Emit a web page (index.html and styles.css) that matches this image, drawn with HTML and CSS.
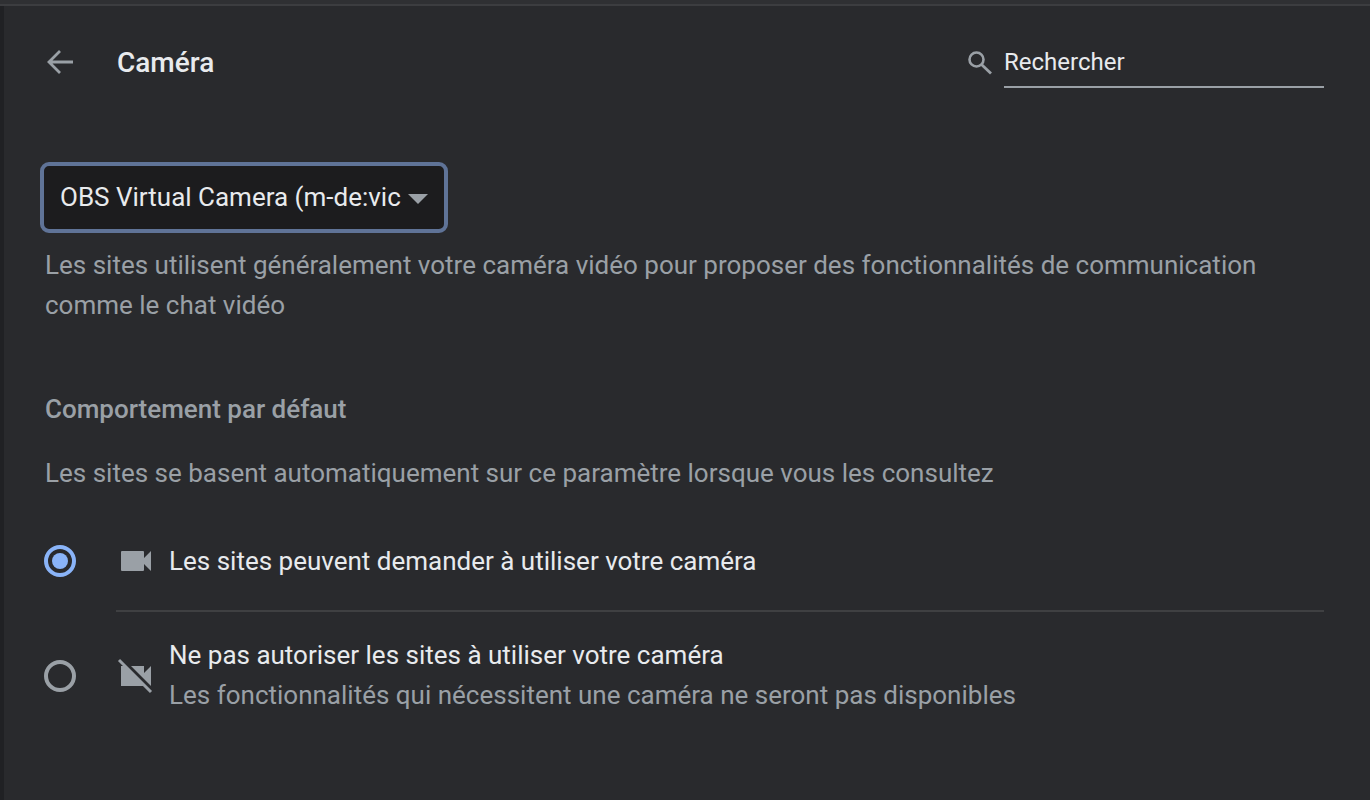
FILE: index.html
```html
<!DOCTYPE html>
<html lang="fr">
<head>
    <meta charset="UTF-8">
    <title>Caméra</title>
    <link rel="stylesheet" href="styles.css">
</head>
<body>
    <div class="topStrip"></div>
    <div class="page">
        <div class="sideStrip"></div>
        <div class="content">

            <div class="header">
                <svg class="backIcon" width="32" height="32" viewBox="0 0 32 32">
                    <path d="M28 16H4M15 5L4 16l11 11" fill="none" stroke="#9aa0a6" stroke-width="2.8"/>
                </svg>
                <div class="title">Caméra</div>
                <div class="search">
                    <svg class="searchIcon" width="26" height="26" viewBox="0 0 26 26">
                        <circle cx="10.5" cy="10.500" r="7" fill="none" stroke="#9aa0a6" stroke-width="2.6"/>
                        <path d="M15.500 15.500l9.500 9" fill="none" stroke="#9aa0a6" stroke-width="2.8"/>
                    </svg>
                    <div class="searchBox">Rechercher</div>
                </div>
            </div>

            <div class="cameraSelect">
                <span class="cameraName">OBS Virtual Camera (m-de:vic</span>
                <span class="arrow"></span>
            </div>

            <div class="description">Les sites utilisent généralement votre caméra vidéo pour proposer des fonctionnalités de communication comme le chat vidéo</div>

            <div class="sectionTitle">Comportement par défaut</div>
            <div class="sectionText">Les sites se basent automatiquement sur ce paramètre lorsque vous les consultez</div>

            <div class="option optionFirst">
                <div class="radio radioOn"><div class="radioDot"></div></div>
                <svg class="optionIcon" width="32" height="32" viewBox="0 0 32 32">
                    <path d="M2 6h21a1 1 0 0 1 1 1v6l7-7v20l-7-7v6a1 1 0 0 1-1 1H2a1 1 0 0 1-1-1V7a1 1 0 0 1 1-1z" fill="#9aa0a6"/>
                </svg>
                <div class="optionLabel">Les sites peuvent demander à utiliser votre caméra</div>
            </div>

            <div class="separator"></div>

            <div class="option optionSecond">
                <div class="radio"></div>
                <svg class="optionIcon" width="32" height="32" viewBox="0 0 32 32">
                    <path d="M1 6h4l20 20H1z" fill="#9aa0a6"/>
                    <path d="M11 6h13v7l7-7v20z" fill="#9aa0a6"/>
                    <path d="M-1 0l32 32" fill="none" stroke="#9aa0a6" stroke-width="3"/>
                </svg>
                <div class="optionText">
                    <div class="optionLabel">Ne pas autoriser les sites à utiliser votre caméra</div>
                    <div class="optionSub">Les fonctionnalités qui nécessitent une caméra ne seront pas disponibles</div>
                </div>
            </div>

        </div>
    </div>
</body>
</html>
```

FILE: styles.css
```css
html, body {
    margin: 0;
    height: 100%;
    overflow: hidden;
}
body {
    background-color: #292a2d;
    font-family: Roboto, sans-serif;
    font-size: 26px;
    color: #e8eaed;
}
.topStrip {
    height: 4px;
    background-color: #2f3033;
    border-bottom: 2px solid #3c3d40;
}
.page {
    display: flex;
    height: 794px;
}
.sideStrip {
    width: 4px;
    background-color: #202124;
}
.content {
    width: 1279px;
    padding-left: 41px;
}
.header {
    display: flex;
    align-items: center;
    height: 112px;
}
.title {
    margin-left: 40px;
    font-size: 28px;
    font-weight: 500;
    flex: 1;
}
.search {
    display: flex;
    align-items: center;
}
.searchIcon {
    margin-right: 12px;
}
.searchBox {
    width: 320px;
    height: 50px;
    line-height: 48px;
    font-size: 24px;
    border-bottom: 2px solid #9aa0a6;
    box-sizing: border-box;
    margin-top: 1px;
}
.cameraSelect {
    display: flex;
    align-items: center;
    box-sizing: border-box;
    width: 408px;
    height: 71px;
    margin-top: 44px;
    margin-left: -5px;
    padding-left: 16px;
    padding-bottom: 2px;
    background-color: #1c1c1e;
    border: 4px solid #5f7397;
    border-radius: 9px;
}
.cameraName {
    white-space: nowrap;
}
.arrow {
    margin-left: 7px;
    margin-top: 4px;
    border-left: 10px solid transparent;
    border-right: 10px solid transparent;
    border-top: 10px solid #9aa0a6;
}
.description {
    margin-top: 12px;
    width: 1230px;
    line-height: 40px;
    color: #9aa0a6;
}
.sectionTitle {
    margin-top: 64px;
    line-height: 40px;
    font-weight: 500;
    color: #9aa0a6;
}
.sectionText {
    margin-top: 24px;
    line-height: 40px;
    color: #9aa0a6;
}
.option {
    display: flex;
    align-items: center;
    margin-left: -1px;
}
.optionFirst {
    height: 98px;
    margin-top: 19px;
}
.optionSecond {
    height: 128px;
}
.optionText {
    margin-top: -2px;
}
.separator {
    height: 2px;
    margin-left: 71px;
    background-color: #3f4042;
}
.radio {
    box-sizing: border-box;
    width: 32px;
    height: 32px;
    border: 4px solid #9aa0a6;
    border-radius: 50%;
    margin-right: 44px;
    display: flex;
    align-items: center;
    justify-content: center;
    flex-shrink: 0;
}
.radioOn {
    border-color: #8ab4f8;
}
.radioDot {
    width: 16px;
    height: 16px;
    border-radius: 50%;
    background-color: #8ab4f8;
}
.optionIcon {
    margin-right: 17px;
    flex-shrink: 0;
    overflow: visible;
}
.optionLabel {
    line-height: 40px;
}
.optionSub {
    line-height: 40px;
    color: #9aa0a6;
}
```
